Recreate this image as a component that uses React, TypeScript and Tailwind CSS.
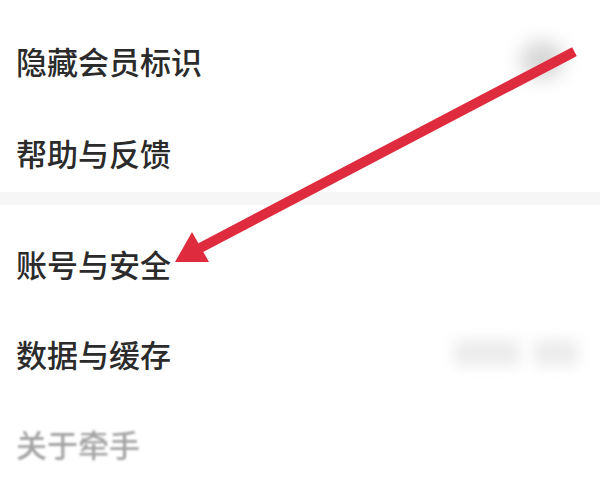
import * as React from "react";

// Settings list (blurred screenshot of a mobile "settings" page) with a red
// annotation arrow pointing at the account & security row.

function Row({
  label,
  className,
  textClassName,
  children,
}: {
  label: string;
  className?: string;
  textClassName?: string;
  children?: React.ReactNode;
}) {
  return (
    <div className={`flex items-center justify-between pl-[16px] ${className ?? ""}`}>
      <span className={`text-[31px] leading-none font-medium ${textClassName ?? "text-[#2b2b2b]"}`}>
        {label}
      </span>
      {children}
    </div>
  );
}

function Arrow() {
  return (
    <svg
      className="pointer-events-none absolute inset-0"
      width="600"
      height="493"
      viewBox="0 0 600 493"
    >
      <line
        x1="570"
        y1="54"
        x2="200"
        y2="248"
        stroke="#df2b3e"
        strokeWidth="10"
        strokeLinecap="square"
      />
      <polygon points="175,262 192,232 209,262" fill="#df2b3e" />
    </svg>
  );
}

export default function App() {
  return (
    <div
      className="relative h-[493px] w-[600px] overflow-hidden bg-white"
      style={{ fontFamily: '"Noto Sans CJK SC", "Noto Sans", sans-serif' }}
    >
      <div className="flex flex-col pt-[14px]">
        <Row label="隐藏会员标识" className="h-[92px] pr-[36px]">
          <div className="h-[38px] w-[44px] rounded-full bg-[#d8d8d8] blur-[9px]" />
        </Row>
        <Row label="帮助与反馈" className="h-[86px] pt-[6px]" />
        <div className="h-[13px] bg-[#f6f6f6]" />
        <Row label="账号与安全" className="h-[103px] pt-[14px]" />
        <Row label="数据与缓存" className="h-[90px] pr-[22px]">
          <div className="flex items-center gap-[14px] blur-[7px]">
            <div className="h-[26px] w-[66px] rounded bg-[#ececec]" />
            <div className="h-[26px] w-[44px] rounded bg-[#ececec]" />
          </div>
        </Row>
        <Row
          label="关于牵手"
          className="h-[95px] pb-[4px]"
          textClassName="text-[#a3a3a3] blur-[0.8px]"
        />
      </div>
      <Arrow />
    </div>
  );
}
